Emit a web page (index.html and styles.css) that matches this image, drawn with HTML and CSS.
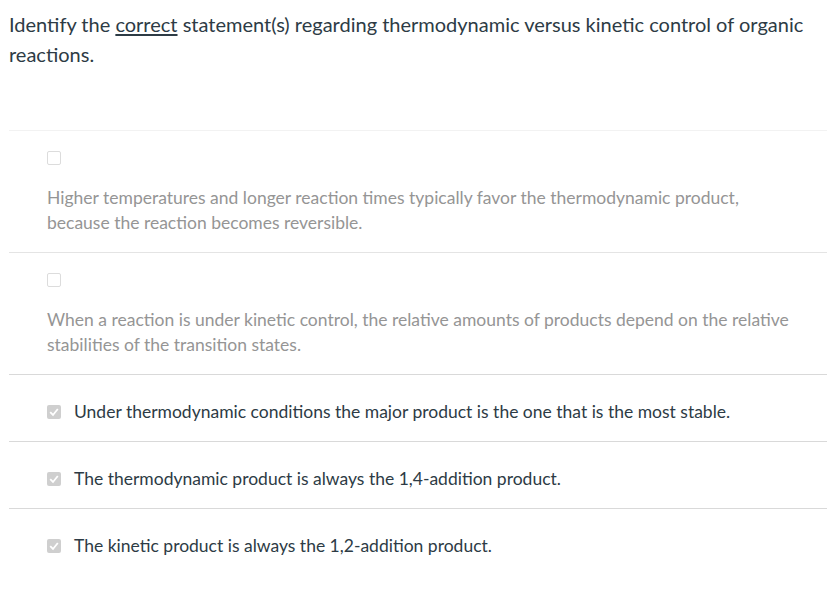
FILE: index.html
```html
<!DOCTYPE html>
<html>
<head>
<meta charset="utf-8">
<link rel="stylesheet" href="styles.css">
</head>
<body>
<div class="question">
  <p class="prompt">Identify the <span class="em">correct</span> statement(s) regarding thermodynamic versus kinetic control of organic reactions.</p>
  <div class="answers">
    <div class="answer stacked first">
      <span class="box"></span>
      <p class="text muted">Higher temperatures and longer reaction times typically favor the thermodynamic product, because the reaction becomes reversible.</p>
    </div>
    <div class="answer stacked">
      <span class="box"></span>
      <p class="text muted">When a reaction is under kinetic control, the relative amounts of products depend on the relative stabilities of the transition states.</p>
    </div>
    <div class="answer inline">
      <span class="box checked"><svg viewBox="0 0 14 14" width="14" height="14"><path d="M3.2 7.2 L6 10 L10.8 4" fill="none" stroke="#fff" stroke-width="1.8"/></svg></span>
      <p class="text">Under thermodynamic conditions the major product is the one that is the most stable.</p>
    </div>
    <div class="answer inline">
      <span class="box checked"><svg viewBox="0 0 14 14" width="14" height="14"><path d="M3.2 7.2 L6 10 L10.8 4" fill="none" stroke="#fff" stroke-width="1.8"/></svg></span>
      <p class="text">The thermodynamic product is always the 1,4-addition product.</p>
    </div>
    <div class="answer inline last">
      <span class="box checked"><svg viewBox="0 0 14 14" width="14" height="14"><path d="M3.2 7.2 L6 10 L10.8 4" fill="none" stroke="#fff" stroke-width="1.8"/></svg></span>
      <p class="text">The kinetic product is always the 1,2-addition product.</p>
    </div>
  </div>
</div>
</body>
</html>
```
FILE: styles.css
```css
html, body {
  margin: 0;
  padding: 0;
  background: #fff;
}
body {
  font-family: Lato, "Open Sans", sans-serif;
  color: #2d3b45;
}
.question {
  padding: 9px 0 0 9px;
}
.prompt {
  margin: 0;
  font-size: 20px;
  line-height: 30px;
  padding-right: 10px;
}
.em {
  text-decoration: underline;
  text-underline-offset: 2px;
}
.answers {
  margin-top: 61px;
}
.answer {
  border-top: 1px solid #e4e4e4;
  padding-left: 38px;
  padding-right: 30px;
}
.answer.first {
  border-top-color: #f2f2f2;
}
.answer.stacked {
  padding-top: 20px;
  padding-bottom: 17px;
}
.answer.stacked .box {
  display: block;
  margin-bottom: 20px;
}
.answer.inline {
  display: flex;
  align-items: center;
  gap: 13px;
  padding-top: 24px;
  padding-bottom: 17px;
  border-top-color: #d9d9d9;
}
.box {
  width: 12px;
  height: 12px;
  border: 1px solid #dcdcdc;
  border-radius: 2px;
  background: #fff;
  flex: none;
}
.box.checked {
  width: 14px;
  height: 14px;
  border: none;
  background: #cfcfcf;
}
.box svg {
  display: block;
}
.text {
  margin: 0;
  font-size: 17.5px;
  line-height: 25px;
}
.muted {
  color: #959595;
}
```
